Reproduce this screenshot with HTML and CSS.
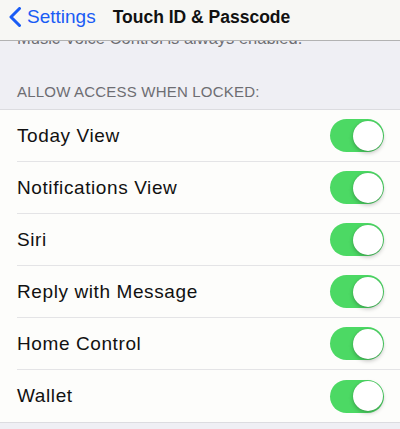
FILE: index.html
```html
<!DOCTYPE html>
<html lang="en">
<head>
  <meta charset="UTF-8">
  <title>Touch ID &amp; Passcode</title>
  <link rel="stylesheet" href="styles.css">
</head>
<body>

<div class="navbar">
  <a class="back" href="#">
    <svg class="chevron" width="14" height="20" viewBox="0 0 14 20">
      <path d="M11.5 1.5 L3 10 L11.5 18.5" fill="none" stroke="#1a5cf5" stroke-width="3" stroke-linecap="round" stroke-linejoin="round"/>
    </svg>
    <span>Settings</span>
  </a>
  <div class="title">Touch ID &amp; Passcode</div>
</div>

<div class="content">
  <div class="footnote">Music Voice Control is always enabled.</div>

  <div class="section-header">ALLOW ACCESS WHEN LOCKED:</div>

  <div class="group">
    <div class="row"><span class="label">Today View</span><span class="switch on"></span></div>
    <div class="row"><span class="label">Notifications View</span><span class="switch on"></span></div>
    <div class="row"><span class="label">Siri</span><span class="switch on"></span></div>
    <div class="row"><span class="label">Reply with Message</span><span class="switch on"></span></div>
    <div class="row"><span class="label">Home Control</span><span class="switch on"></span></div>
    <div class="row"><span class="label">Wallet</span><span class="switch on"></span></div>
  </div>
</div>

</body>
</html>
```

FILE: styles.css
```css
body {
  font-family: 'Liberation Sans', Arial, sans-serif;
  background-color: #efeff4;
  margin: 0;
  height: 429px;
  overflow: hidden;
}

.navbar {
  position: relative;
  z-index: 2;
  height: 40px;
  background: #f7f7f4;
  border-bottom: 1px solid #b2b2b2;
  display: flex;
  align-items: center;
}

.back {
  display: flex;
  align-items: center;
  color: #1a5cf5;
  text-decoration: none;
  font-size: 19px;
  padding-left: 8px;
  margin-top: -6px;
}

.chevron {
  margin-right: 5px;
}

.title {
  font-size: 17.5px;
  font-weight: bold;
  color: #111;
  margin-left: 17px;
  margin-top: -6px;
}

.content {
  margin-top: -13px;
}

.footnote {
  font-size: 16.5px;
  color: #6d6d72;
  padding-left: 17px;
  height: 20px;
  line-height: 20px;
}

.section-header {
  font-size: 15px;
  color: #6d6d72;
  padding: 35px 17px 8px;
  letter-spacing: 0.2px;
  line-height: 18px;
}

.group {
  background: #fdfdfb;
  border-top: 1px solid #dcdce0;
  border-bottom: 1px solid #dcdce0;
}

.row {
  display: flex;
  align-items: center;
  justify-content: space-between;
  height: 51px;
  margin-left: 17px;
  padding-right: 16px;
  border-bottom: 1px solid #e4e4e6;
}

.row:last-child {
  border-bottom: none;
  height: 52px;
}

.label {
  font-size: 19px;
  color: #111;
  letter-spacing: 0.6px;
}

.switch {
  position: relative;
  width: 54px;
  height: 33px;
  border-radius: 17px;
  background: #e5e5ea;
}

.switch.on {
  background: #4cd964;
}

.switch::after {
  content: "";
  position: absolute;
  top: 1.5px;
  left: 1.5px;
  width: 30px;
  height: 30px;
  border-radius: 50%;
  background: #fff;
  box-shadow: 0 2px 4px rgba(0, 0, 0, 0.25), 0 0 1px rgba(0, 0, 0, 0.2);
}

.switch.on::after {
  left: 22.5px;
}
```
